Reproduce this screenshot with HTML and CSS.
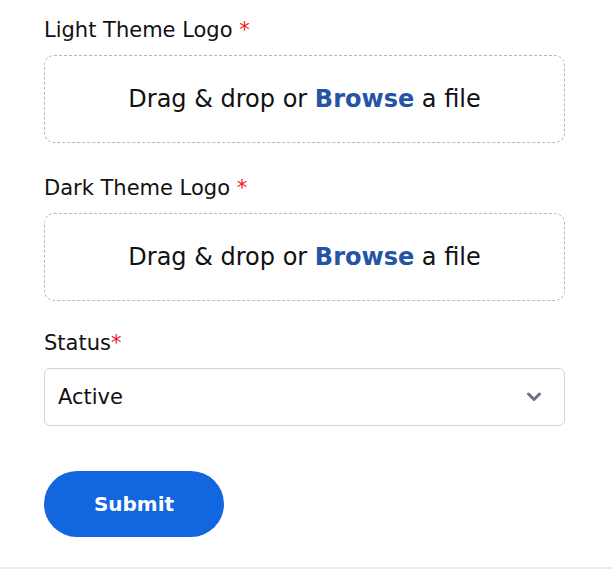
FILE: index.html
```html
<!DOCTYPE html>
<html>
<head>
<meta charset="utf-8">
<link rel="stylesheet" href="styles.css">
</head>
<body>
<div class="page">
  <form class="form">
    <div class="field">
      <label class="label">Light Theme Logo <span class="req">*</span></label>
      <div class="dropzone">Drag &amp; drop or&nbsp;<span class="browse">Browse</span>&nbsp;a file</div>
    </div>
    <div class="field field-last-upload">
      <label class="label">Dark Theme Logo <span class="req">*</span></label>
      <div class="dropzone">Drag &amp; drop or&nbsp;<span class="browse">Browse</span>&nbsp;a file</div>
    </div>
    <div class="field field-status">
      <label class="label">Status<span class="req">*</span></label>
      <div class="select">
        <span>Active</span>
        <svg class="chev" width="16" height="10" viewBox="0 0 16 10"><path d="M2.5 2 L8 7.5 L13.5 2" fill="none" stroke="#6b7280" stroke-width="3" stroke-linecap="round" stroke-linejoin="round"/></svg>
      </div>
    </div>
    <button type="button" class="submit">Submit</button>
  </form>
</div>
</body>
</html>
```

FILE: styles.css
```css
* { box-sizing: border-box; }
html, body { margin: 0; padding: 0; background: #fff; }
body { font-family: "DejaVu Sans", Inter, sans-serif; color: #111; }
.page {
  width: 613px;
  height: 569px;
  border-bottom: 2px solid #ececf0;
  overflow: hidden;
}
.form {
  padding: 17px 0 0 44px;
  width: 565px;
  display: flex;
  flex-direction: column;
}
.field { display: flex; flex-direction: column; gap: 11px; margin-bottom: 32px; }
.field-last-upload { margin-bottom: 29px; }
.field-status { margin-bottom: 45px; }
.label { font-size: 21px; line-height: 27px; color: #111; }
.req { color: #f0141e; }
.dropzone {
  height: 88px;
  border: 1px dashed #b8b8bc;
  border-radius: 10px;
  display: flex;
  align-items: center;
  justify-content: center;
  font-size: 24px;
  color: #111;
}
.browse { color: #2553a5; font-weight: 700; }
.select {
  height: 58px;
  border: 1px solid #d3d3da;
  border-radius: 6px;
  display: flex;
  align-items: center;
  justify-content: space-between;
  padding: 0 22px 0 13px;
  font-size: 21px;
  color: #111;
}
.submit {
  width: 180px;
  height: 66px;
  border: none;
  border-radius: 33px;
  background: #1266e0;
  color: #fff;
  font-family: inherit;
  font-size: 20px;
  font-weight: 700;
}
```
